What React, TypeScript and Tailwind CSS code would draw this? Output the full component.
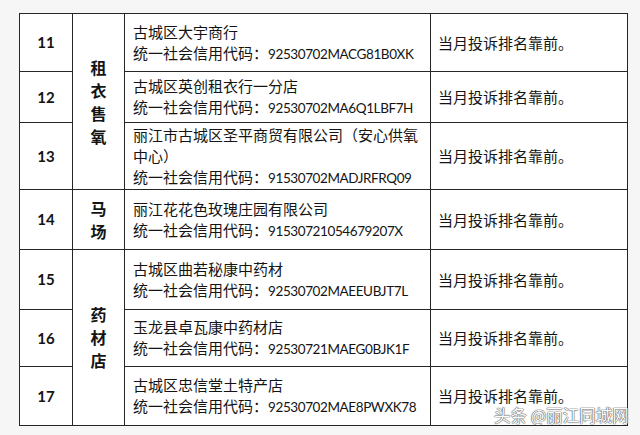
import React from "react";

const rows = [
  { n: "11", h: 58, name: ["古城区大宇商行"], code: "92530702MACG81B0XK" },
  { n: "12", h: 51, name: ["古城区英创租衣行一分店"], code: "92530702MA6Q1LBF7H" },
  { n: "13", h: 67, name: ["丽江市古城区圣平商贸有限公司（安心供氧", "中心）"], code: "91530702MADJRFRQ09" },
  { n: "14", h: 60, name: ["丽江花花色玫瑰庄园有限公司"], code: "915307210546792O7X".replace("O", "0") },
  { n: "15", h: 60, name: ["古城区曲若秘康中药材"], code: "92530702MAEEUBJT7L" },
  { n: "16", h: 57, name: ["玉龙县卓瓦康中药材店"], code: "92530721MAEG0BJK1F" },
  { n: "17", h: 59, name: ["古城区忠信堂土特产店"], code: "92530702MAE8PWXK78" },
];

const groups: Record<number, { span: number; chars: string[] }> = {
  0: { span: 3, chars: ["租", "衣", "售", "氧"] },
  3: { span: 1, chars: ["马", "场"] },
  4: { span: 3, chars: ["药", "材", "店"] },
};

const cell = "border-[1.5px] border-[#262626]";

export default function App() {
  return (
    <div className="relative w-[640px] h-[435px] bg-[#f6f6f6] pt-[13px] pl-[19px] font-['Lato','Noto_Sans_CJK_SC',sans-serif] text-[#141414]">
      <table className="border-collapse bg-white w-[608px] table-fixed">
        <colgroup>
          <col className="w-[53px]" />
          <col className="w-[52px]" />
          <col className="w-[306px]" />
          <col className="w-[197px]" />
        </colgroup>
        <tbody>
          {rows.map((r, i) => (
            <tr key={r.n} style={{ height: r.h }}>
              <td className={`${cell} text-center font-bold text-[15px]`}>{r.n}</td>
              {groups[i] && (
                <td rowSpan={groups[i].span} className={`${cell} text-center font-bold text-[16px] leading-[23px] font-['Noto_Sans_CJK_SC',sans-serif]`}>
                  {groups[i].chars.map((c) => (
                    <div key={c}>{c}</div>
                  ))}
                </td>
              )}
              <td className={`${cell} pl-[8px] text-[15px] leading-[21px] font-['Noto_Sans_CJK_SC',sans-serif]`}>
                {r.name.map((t) => (
                  <div key={t}>{t}</div>
                ))}
                <div>
                  统一社会信用代码：<span className="font-['Lato',sans-serif] text-[13.5px] tracking-[-0.4px]">{r.code}</span>
                </div>
              </td>
              <td className={`${cell} pl-[7px] text-[15px] leading-[18px] font-['Noto_Sans_CJK_SC',sans-serif]`}>当月投诉排名靠前。</td>
            </tr>
          ))}
        </tbody>
      </table>
      <div
        className="absolute left-[494px] top-[407px] text-[16.5px] leading-[17px] text-white font-['Noto_Sans_CJK_SC',sans-serif]"
        style={{ textShadow: "0 0 1px #555, 0 0 1px #555, 0 0 1px #555" }}
      >
        头条 @丽江同城网
      </div>
    </div>
  );
}
